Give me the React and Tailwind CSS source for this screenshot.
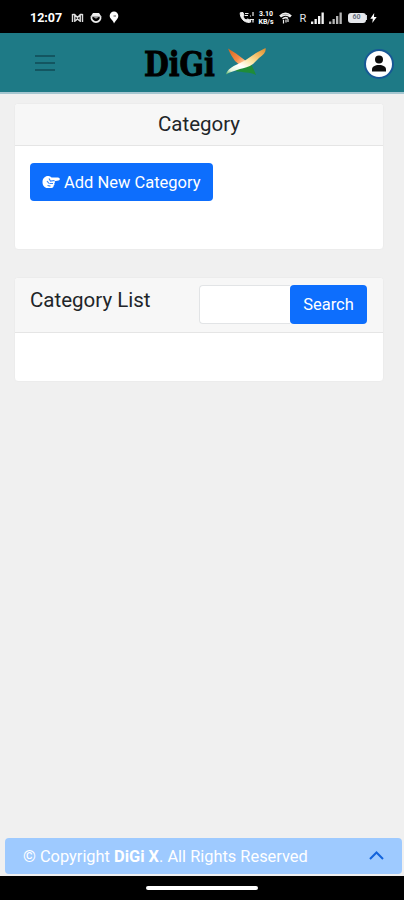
import React, { useState } from "react";

const SignalIcon = ({ dim }) => (
  <svg width="13" height="12" viewBox="0 0 13 12" fill={dim ? "#b5b5b5" : "#f5f5f5"}>
    <rect x="0" y="9.5" width="2.3" height="2.5" />
    <rect x="3.5" y="7" width="2.3" height="5" />
    <rect x="7" y="4" width="2.3" height="8" />
    <rect x="10.5" y="0.5" width="2.3" height="11.5" />
  </svg>
);

const StatusBar = () => (
  <div className="h-[33px] shrink-0 bg-black text-white flex items-center pl-[30px] pr-[27px] pt-[2px]">
    <span className="text-[12.5px] font-bold w-[41px] pt-px leading-none whitespace-nowrap">12:07</span>
    <svg width="13" height="10" viewBox="0 0 12 10" fill="none" stroke="#ddd" strokeWidth="1.4">
      <path d="M1 1v8M3.3 1v8M8.7 1v8M11 1v8M1 1.5h2l3 3 3-3h2M3 8.5l3-2.5 3 2.5" />
    </svg>
    <svg className="ml-[6px]" width="12" height="12" viewBox="0 0 12 12" fill="none">
      <path d="M1.5 4.5a4.6 4.6 0 1 0 9 0" stroke="#eee" strokeWidth="1.7" />
      <path d="M0.5 4.8h11L9 1H3z" fill="#eee" />
      <path d="M3 4.8h6l-3 2z" fill="#999" />
    </svg>
    <svg className="ml-[7px]" width="10" height="13" viewBox="0 0 10 13" fill="#fff">
      <path d="M5 0.5a4.3 4.3 0 0 1 4.3 4.3C9.3 8 6.5 9.5 5 12.5 4.6 9.5 0.7 8 0.7 4.8A4.3 4.3 0 0 1 5 0.5z" />
      <path d="M4.5 5h2.5" stroke="#555" strokeWidth="1" />
    </svg>
    <div className="ml-auto flex items-center">
      <svg width="16" height="13" viewBox="0 0 16 13" fill="none" stroke="#eee">
        <path d="M1.2 1.8C1.2 7.5 5 11.5 10.5 11.5L11 9 8.7 8 7 9C5.5 8 4.7 7 4.3 5.5L5 4.5 4 1.5z" fill="#eee" />
        <path d="M6 2.5h3.5M6 4.5h3M11 5h1M14 1v4M11.5 8v3.5M14 8v3.5M12 8.5h3" strokeWidth="1.2" />
      </svg>
      <div className="ml-[3px] w-[17px] text-center text-[7px] leading-[8px] font-bold">
        <div>3.10</div>
        <div>KB/s</div>
      </div>
      <svg className="ml-[4px]" width="13" height="12" viewBox="0 0 13 12" fill="none" stroke="#eee" strokeWidth="1.6">
        <path d="M0.7 4Q6.5-1.5 12.3 4M1.5 5Q6.5 1 11.5 5M3.5 7Q6.5 4.5 9 6.5" />
        <path d="M4.5 8v3.5M7 7.5v3M9 7v3" strokeWidth="1.2" />
      </svg>
      <span className="ml-[8px] w-[8px] pt-px text-[11px] leading-none text-gray-200">R</span>
      <span className="ml-[3px]"><SignalIcon /></span>
      <span className="ml-[5px]"><SignalIcon dim /></span>
      <div className="ml-[6px] h-[10px] w-[18px] rounded-[3px] bg-gray-200 flex items-center justify-center text-[7px] font-bold leading-none text-gray-500">
        60
      </div>
      <div className="h-[5px] w-[1.5px] bg-gray-300" />
      <svg className="ml-[3px]" width="7" height="10" viewBox="0 0 7 10" fill="#fff">
        <path d="M4.2 0 0.3 5.7h2.5L2.3 10 6.7 4H4z" />
      </svg>
    </div>
  </div>
);

const XLogo = () => (
  <svg width="42" height="30" viewBox="0 0 42 30">
    <defs>
      <linearGradient id="saffron" x1="0" y1="0" x2="1" y2="1">
        <stop offset="0" stopColor="#d5661d" />
        <stop offset="0.55" stopColor="#f58a45" />
        <stop offset="1" stopColor="#fff0d0" />
      </linearGradient>
      <linearGradient id="sweep" x1="0" y1="1" x2="1" y2="0">
        <stop offset="0" stopColor="#4fae60" />
        <stop offset="0.14" stopColor="#e6f5dc" />
        <stop offset="0.35" stopColor="#ffffff" />
        <stop offset="0.58" stopColor="#fbe3a0" />
        <stop offset="0.8" stopColor="#f1b45a" />
        <stop offset="1" stopColor="#d98a2c" />
      </linearGradient>
    </defs>
    <path d="M3 1.5L11 6.5L21 14L17 20L10 14C8 11 5 7 3 1.5z" fill="url(#saffron)" />
    <path d="M10 24C14 21 19 20 26 17L29 23L31 28C25 25 18 25.500 10 24z" fill="#1f8c38" />
    <path d="M1 27.500C2 23 7 19.500 13 17L20 13.500L31 6L40.500 1C41.500 4 39 8 34 11L28 17C24 20 19 21 15 22C10 24 5 24.500 1 27.500z" fill="url(#sweep)" />
  </svg>
);

const Header = () => (
  <header className="h-[61px] shrink-0 bg-[#1e7a86] border-b-2 border-[#a5c6d0] flex items-center pl-[35px] pr-[10px]">
    <button className="mt-px w-[20px] h-[16px] flex flex-col justify-between">
      <span className="h-[2px] w-full bg-[#135661]" />
      <span className="h-[2px] w-full bg-[#135661]" />
      <span className="h-[2px] w-full bg-[#135661]" />
    </button>
    <div className="ml-[89px] w-[72px] pt-[3px] text-black">
      <span className="block origin-left scale-x-[0.84] whitespace-nowrap font-['DejaVu_Serif'] text-[34px] font-bold leading-[40px] [-webkit-text-stroke:1px_black]">
        DiGi
      </span>
    </div>
    <div className="ml-[9px] -mt-[2px]">
      <XLogo />
    </div>
    <button className="ml-auto mt-[2px] h-[30px] w-[30px] rounded-full border-2 border-[#175896] bg-white flex items-center justify-center">
      <svg width="16" height="17" viewBox="0 0 16 17" fill="#0c0c0c">
        <circle cx="8" cy="4.5" r="4" />
        <path d="M1 16.5V14.5C1 11.5 4 10 8 10s7 1.5 7 4.5v2z" />
      </svg>
    </button>
  </header>
);

const PointerIcon = () => (
  <svg width="18" height="14" viewBox="0 0 18 14" fill="#fff">
    <path d="M6 1C3 1 0.5 3.5 0.5 7s2 6 5 6h4c1.5 0 2.3-1 2-2.2 1-.4 1.2-1.6.7-2.3.9-.6.9-1.7.3-2.3l4-.8c1 0 1.3-.7 1.3-1.3S17 2.5 16 2.5H9.5C8.5 1.5 7.5 1 6 1z" />
    <path d="M7 3.5 8.5 6.2 12.5 5.5M7.5 8.5h3.5M5.500 10.500l3 .6M5 6l2 2.500" fill="none" stroke="#3484fb" strokeWidth="1.2" />
  </svg>
);

const App = () => {
  const [search, setSearch] = useState("");

  return (
    <div className="h-[900px] w-[404px] flex flex-col overflow-hidden bg-[#f0f0f0] font-[Roboto,sans-serif]">
      <StatusBar />
      <Header />
      <main className="flex-1 pl-[14px] pr-[20px] pt-[9px]">
        <section className="h-[147px] rounded border border-[#ececec] bg-white">
          <div className="h-[42px] rounded-t border-b border-[#e5e5e5] bg-[#f7f7f7] flex items-center justify-center">
            <h5 className="pb-px text-[20.5px] leading-6 text-[#212529]">Category</h5>
          </div>
          <div className="px-[15px] pt-[17px]">
            <button className="h-[38px] w-[183px] rounded bg-[#0d6efd] text-white flex items-center pl-[12px] text-[16.5px] whitespace-nowrap">
              <PointerIcon />
              <span className="ml-[4px] pt-[2px]">Add New Category</span>
            </button>
          </div>
        </section>

        <section className="mt-[27px] h-[105px] rounded border border-[#ececec] bg-white">
          <div className="h-[55px] rounded-t border-b border-[#e5e5e5] bg-[#f7f7f7] flex justify-between pl-[15px] pr-[16px] pt-[7px]">
            <h5 className="pt-[3px] text-[20.5px] leading-6 text-[#212529]">Category List</h5>
            <div className="flex h-[39px]">
              <input
                type="text"
                value={search}
                onChange={(e) => setSearch(e.target.value)}
                className="w-[91px] rounded-l border border-r-0 border-[#e2e4e6] bg-white px-3 outline-none"
              />
              <button className="w-[77px] rounded bg-[#0d6efd] pt-[2px] text-[16.5px] text-white">
                Search
              </button>
            </div>
          </div>
        </section>
      </main>

      <footer className="ml-[5px] mr-[2px] mb-[2px] h-[36px] shrink-0 rounded bg-[#9ecaff] flex items-center justify-between pl-[18px] pr-[18px] text-[16.4px] text-white">
        <p className="whitespace-nowrap pt-[2px]">
          © Copyright <b>DiGi X</b>. All Rights Reserved
        </p>
        <svg className="-mt-[2px]" width="15" height="9" viewBox="0 0 15 9" fill="none" stroke="#1464dc" strokeWidth="2">
          <path d="M1 8 7.5 1.5 14 8" />
        </svg>
      </footer>
      <div className="h-[24px] shrink-0 bg-black flex items-center justify-center">
        <div className="h-[4px] w-[112px] rounded-full bg-white" />
      </div>
    </div>
  );
};

export default App;
